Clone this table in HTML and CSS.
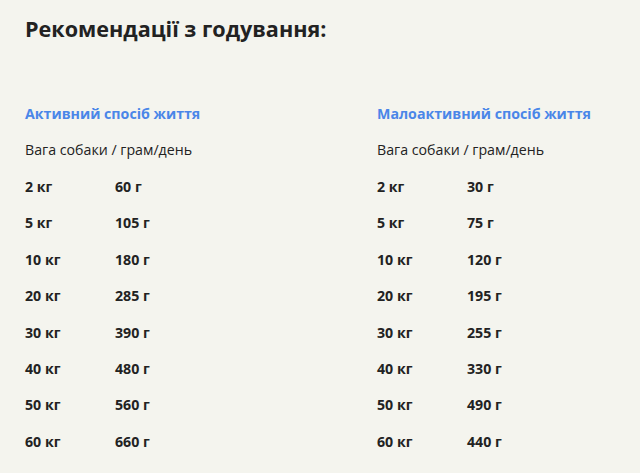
FILE: index.html
```html
<!DOCTYPE html>
<html lang="uk">
<head>
<meta charset="utf-8">
<link rel="stylesheet" href="styles.css">
</head>
<body>
<div class="page">
  <h2 class="title">Рекомендації з годування:</h2>
  <div class="columns">
    <div class="col">
      <h3 class="col-title">Активний спосіб життя</h3>
      <p class="sub">Вага собаки / грам/день</p>
      <div class="rows">
        <div class="row"><span>2 кг</span><span>60 г</span></div>
        <div class="row"><span>5 кг</span><span>105 г</span></div>
        <div class="row"><span>10 кг</span><span>180 г</span></div>
        <div class="row"><span>20 кг</span><span>285 г</span></div>
        <div class="row"><span>30 кг</span><span>390 г</span></div>
        <div class="row"><span>40 кг</span><span>480 г</span></div>
        <div class="row"><span>50 кг</span><span>560 г</span></div>
        <div class="row"><span>60 кг</span><span>660 г</span></div>
      </div>
    </div>
    <div class="col">
      <h3 class="col-title">Малоактивний спосіб життя</h3>
      <p class="sub">Вага собаки / грам/день</p>
      <div class="rows">
        <div class="row"><span>2 кг</span><span>30 г</span></div>
        <div class="row"><span>5 кг</span><span>75 г</span></div>
        <div class="row"><span>10 кг</span><span>120 г</span></div>
        <div class="row"><span>20 кг</span><span>195 г</span></div>
        <div class="row"><span>30 кг</span><span>255 г</span></div>
        <div class="row"><span>40 кг</span><span>330 г</span></div>
        <div class="row"><span>50 кг</span><span>490 г</span></div>
        <div class="row"><span>60 кг</span><span>440 г</span></div>
      </div>
    </div>
  </div>
</div>
</body>
</html>
```
FILE: styles.css
```css
html, body {
  margin: 0;
  padding: 0;
  background: #f4f4ee;
}
.page {
  padding: 16px 25px 0 25px;
  font-family: "Open Sans", sans-serif;
  color: #222222;
}
.title {
  margin: 0;
  font-family: "Open Sans", sans-serif;
  font-weight: bold;
  font-size: 21.6px;
  line-height: 26px;
  color: #222222;
}
.columns {
  display: grid;
  grid-template-columns: 352px 1fr;
  margin-top: 62px;
}
.col-title {
  margin: 0;
  font-size: 14.2px;
  line-height: 20px;
  font-weight: bold;
  color: #4a86e8;
}
.sub {
  margin: 16px 0 0 0;
  font-size: 14.2px;
  line-height: 20px;
}
.rows {
  margin-top: 9px;
}
.row {
  display: grid;
  grid-template-columns: 90px 1fr;
  font-size: 14.2px;
  line-height: 36.4px;
  font-weight: bold;
}
```
